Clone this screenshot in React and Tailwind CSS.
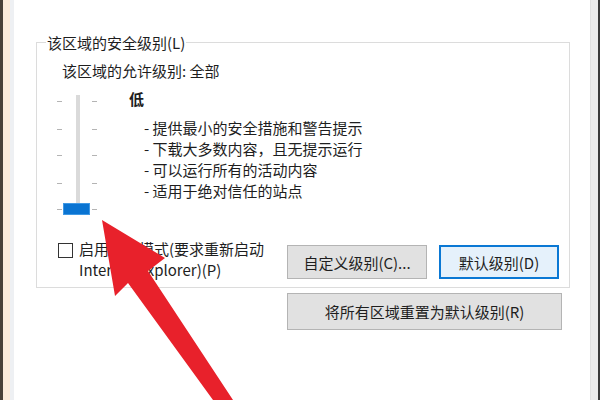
const FONT = { fontFamily: '"Noto Sans CJK SC", "Noto Sans", sans-serif' };

const BULLETS = [
  "提供最小的安全措施和警告提示",
  "下载大多数内容，且无提示运行",
  "可以运行所有的活动内容",
  "适用于绝对信任的站点",
];

const TICKS = [13, 41, 67, 95, 121];

function LevelSlider() {
  return (
    <svg width="44" height="132" viewBox="0 0 44 132" className="shrink-0">
      <rect x="20" y="7" width="4" height="112" fill="#dadada" />
      {TICKS.map((y) => (
        <g key={y}>
          <rect x="1" y={y} width="5" height="1" fill="#b4b4b4" />
          <rect x="36" y={y} width="5" height="1" fill="#b4b4b4" />
        </g>
      ))}
      <rect x="7.5" y="115.5" width="26" height="11" fill="#0a74d2" stroke="#3f98e4" />
    </svg>
  );
}

function Button({ children, className = "" }) {
  return (
    <div
      className={`flex items-center justify-center text-[15px] leading-[21px] text-[#1e1e1e] ${className}`}
    >
      {children}
    </div>
  );
}

export default function App() {
  return (
    <div className="relative flex w-[600px] h-[400px] overflow-hidden bg-white" style={FONT}>
      {/* window edge on the left */}
      <div className="w-[3px] bg-[#4a4136]" />
      <div className="w-[7px] bg-[#fcebd8]" />
      <div className="w-[4px] bg-[#eef0f3]" />

      <div className="flex-1 flex flex-col bg-white">
        {/* security level group */}
        <div className="relative ml-[22px] mt-[42px] w-[534px] border border-[#dcdcdc] pb-[7px] text-[#1e1e1e]">
          <span className="absolute left-[9px] top-[-11px] bg-white px-[1px] text-[15px] leading-[21px]">
            该区域的安全级别(L)
          </span>

          <div className="pl-[25px] pt-[17px] text-[15px] leading-[21px]">
            该区域的允许级别: 全部
          </div>

          <div className="flex mt-[7px] ml-[19px]">
            <LevelSlider />
            <div className="ml-[29px] text-[15px] leading-[21px]">
              <div className="font-bold">低</div>
              <div className="mt-[8px] pl-[18px]">
                {BULLETS.map((b) => (
                  <div key={b} className="-ml-[3px]">- {b}</div>
                ))}
              </div>
            </div>
          </div>

          <div className="flex items-start mt-[18px]">
            <div className="flex items-start ml-[21px]">
              <div className="mt-[5px] w-[15px] h-[15px] border border-[#333] bg-white" />
              <div className="ml-[6px] text-[15px] leading-[21px]">
                启用保护模式(要求重新启动
                <br />
                Internet Explorer)(P)
              </div>
            </div>
            <div className="ml-auto mr-[10px] mt-[7px] flex gap-[12px]">
              <Button className="w-[140px] h-[34px] bg-[#e1e1e1] border border-[#b4b4b4]">
                自定义级别(C)...
              </Button>
              <Button className="w-[120px] h-[34px] bg-[#e5f1fb] border-2 border-[#0a78d4]">
                默认级别(D)
              </Button>
            </div>
          </div>
        </div>

        <Button className="ml-[273px] mt-[5px] w-[275px] h-[37px] bg-[#e1e1e1] border border-[#b4b4b4]">
          将所有区域重置为默认级别(R)
        </Button>
      </div>

      {/* window edge on the right */}
      <div className="w-[8px] bg-[#ebebeb] border-l border-[#e0e0e0]" />
      <div className="w-[2px] bg-[#3a3a3a]" />

      {/* red pointer arrow */}
      <svg className="absolute inset-0 pointer-events-none" width="600" height="400" viewBox="0 0 600 400">
        <polygon
          points="102,220 165,258 148,271 233,400 213,400 128,283 115,296"
          fill="#e8212b"
        />
      </svg>
    </div>
  );
}
